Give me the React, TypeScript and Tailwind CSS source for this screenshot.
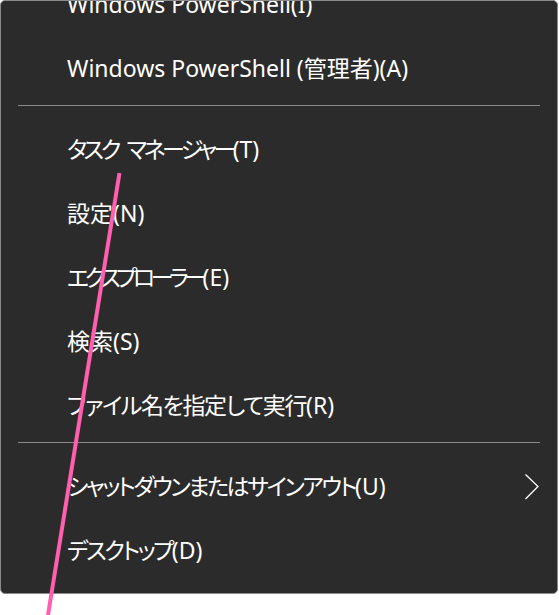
import React from "react";

type Item = { parts: { text: string; cls: string }[]; sub?: boolean };

const N = "tracking-normal";

const groups: Item[][] = [
  [
    { parts: [{ text: "Windows PowerShell(I)", cls: N }] },
    { parts: [{ text: "Windows PowerShell (管理者)(A)", cls: N }] },
  ],
  [
    {
      parts: [
        { text: "タスク", cls: "tracking-[-3.6px]" },
        { text: " ", cls: "inline-block w-[9px]" },
        { text: "マネージャー", cls: "tracking-[-3.6px]" },
        { text: "(T)", cls: N },
      ],
    },
    { parts: [{ text: "設定(N)", cls: N }] },
    {
      parts: [
        { text: "エクスプローラー", cls: "tracking-[-4.5px]" },
        { text: "(E)", cls: N },
      ],
    },
    { parts: [{ text: "検索(S)", cls: N }] },
    {
      parts: [
        { text: "ファイル名を指定して実行", cls: "tracking-[-1.4px]" },
        { text: "(R)", cls: N },
      ],
    },
  ],
  [
    {
      parts: [
        { text: "シャットダウンまたはサインアウト", cls: "tracking-[-2.4px]" },
        { text: "(U)", cls: N },
      ],
      sub: true,
    },
    {
      parts: [
        { text: "デスクトップ", cls: "tracking-[-2.5px]" },
        { text: "(D)", cls: N },
      ],
    },
  ],
];

function Row({ item }: { item: Item }) {
  return (
    <div className="flex h-[64px] items-center justify-between pl-[66px] pr-[17px]">
      <span className="whitespace-pre text-[23px] leading-none text-white [font-feature-settings:'palt']">
        {item.parts.map((p, i) => (
          <span key={i} className={p.cls}>
            {p.text}
          </span>
        ))}
      </span>
      {item.sub && (
        <svg width="16" height="28" viewBox="0 0 16 28" className="mt-[1px]">
          <path d="M1.5 1.5 L14 13.5 L1.5 26" fill="none" stroke="#ffffff" strokeWidth="1.3" />
        </svg>
      )}
    </div>
  );
}

export default function App() {
  return (
    <div
      className="relative h-[615px] w-[559px] overflow-hidden bg-white"
      style={{ fontFamily: '"Segoe UI", "Noto Sans", "Noto Sans CJK JP", sans-serif' }}
    >
      <div className="h-[594px] w-[558px] overflow-hidden rounded-[5px] border border-[#8a8a8a] bg-[#2b2b2b]">
        <div className="-mt-[29px] flex flex-col">
          {groups.map((g, gi) => (
            <React.Fragment key={gi}>
              {gi > 0 && (
                <div className="flex h-[17px] items-start px-[17px] pt-[5px]">
                  <div className="h-px w-full bg-[#8a8a8a]" />
                </div>
              )}
              {g.map((it, ii) => (
                <Row key={ii} item={it} />
              ))}
            </React.Fragment>
          ))}
        </div>
      </div>
      <svg className="absolute left-0 top-0" width="559" height="615" viewBox="0 0 559 615">
        <line x1="119.5" y1="173" x2="48" y2="615" stroke="#ff5fae" strokeWidth="4" />
      </svg>
    </div>
  );
}
